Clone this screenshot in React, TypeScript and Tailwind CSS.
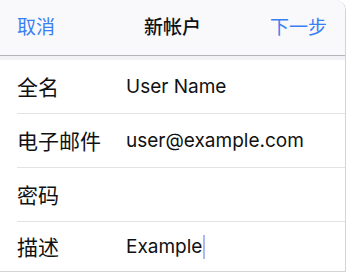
import React from "react";

const font = { fontFamily: 'Inter, "Noto Sans CJK SC", sans-serif' };

function Row({ label, value, last, cursor }: { label: string; value?: string; last?: boolean; cursor?: boolean }) {
  return (
    <div className={last ? "flex-1 pl-[17px] flex" : "h-[54px] pl-[17px] flex"}>
      <div className={last ? "flex-1 flex items-center" : "flex-1 flex items-center border-b border-[#e3e3e6]"}>
        <div className="w-[109px] text-[21px] text-[#111] leading-none" style={{ fontFamily: '"Noto Sans CJK SC", sans-serif' }}>{label}</div>
        <div className="text-[19px] text-[#111] leading-none flex items-center">
          {value}
          {cursor && <span className="inline-block w-[2px] h-[24px] bg-[#a9b9f2] ml-[1px]" />}
        </div>
      </div>
    </div>
  );
}

export default function App() {
  return (
    <div className="w-[348px] h-[274px] bg-white" style={font}>
      <div className="w-[346px] h-[272px] bg-white border-r border-b border-[#d4d4d8] rounded-tr-[10px] overflow-hidden flex flex-col">
        <div className="h-[56px] bg-[#f9f9fb] border-b border-[#b4b4b9] flex items-center justify-between pl-[17px] pr-[18px] relative">
          <span className="text-[19px] text-[#3a80f2] leading-none">取消</span>
          <span className="absolute left-1/2 -translate-x-1/2 text-[19px] font-medium text-[#111] leading-none">新帐户</span>
          <span className="text-[19px] text-[#3a80f2] leading-none">下一步</span>
        </div>
        <div className="h-[4px] bg-[#f2f2f6]" />
        <Row label="全名" value="User Name" />
        <Row label="电子邮件" value="user@example.com" />
        <Row label="密码" />
        <Row label="描述" value="Example" last cursor />
      </div>
    </div>
  );
}
